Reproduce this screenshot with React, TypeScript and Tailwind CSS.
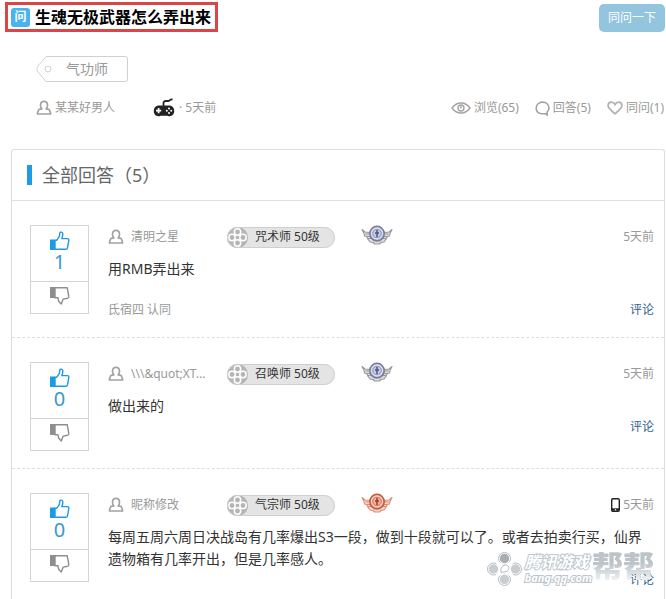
import clsx from "clsx";

type Answer = {
  name: string;
  role: string;
  medal: "silver" | "bronze";
  votes: number;
  text: string;
  agreed?: string;
  mobile?: boolean;
};

const answers: Answer[] = [
  {
    name: "清明之星",
    role: "咒术师 50级",
    medal: "silver",
    votes: 1,
    text: "用RMB弄出来",
    agreed: "氐宿四 认同",
  },
  {
    name: "\\\\\\&quot;XT...",
    role: "召唤师 50级",
    medal: "silver",
    votes: 0,
    text: "做出来的",
  },
  {
    name: "昵称修改",
    role: "气宗师 50级",
    medal: "bronze",
    votes: 0,
    text: "每周五周六周日决战岛有几率爆出S3一段，做到十段就可以了。或者去拍卖行买，仙界遗物箱有几率开出，但是几率感人。",
    mobile: true,
  },
];

function UserIcon() {
  return (
    <svg className="shrink-0" width="16" height="16" viewBox="0 0 16 16" fill="none" stroke="#a3a3a3" strokeWidth="1.7">
      <path
        d="M6.3 9.6C5 8.6 4.5 7 4.5 5.2c0-2.3 1.3-3.8 3.5-3.8s3.5 1.5 3.5 3.8c0 1.800-.5 3.400-1.800 4.400"
      />
      <path d="M5.600 9.200H4.400C2.900 9.200 2.300 10 2.100 11L1.400 14h13.200l-.7-3c-.2-1-.8-1.800-2.300-1.800h-1.200" strokeLinejoin="round" />
    </svg>
  );
}

function ThumbUp() {
  return (
    <svg width="20" height="20" viewBox="0 0 20 20">
      <path d="M0 8.5h5V19H0z" fill="#1b9be3" />
      <path
        d="M5 9.2h1.8L9.4 5.4 9.8 2c.1-1.3 2.9-1.4 3 .8.1 1.8-.3 3.4-1 4.8h5.6c1.1 0 1.6.7 1.4 1.8l-1.3 7.4c-.2 1-.8 1.5-1.8 1.5H5z"
        fill="none"
        stroke="#1b9be3"
        strokeWidth="1.4"
        strokeLinejoin="round"
      />
    </svg>
  );
}

function ThumbDown() {
  return (
    <svg width="20" height="20" viewBox="0 0 20 20">
      <path d="M0 1h5v11H0z" fill="#8e8e8e" />
      <path
        d="M5 1.7h12.2l1.6 8.7c.1.8-.4 1.5-1.200 1.800l-4.400.9-1.900 5-2.600-2.800-.7-3.500H5z"
        fill="none"
        stroke="#8e8e8e"
        strokeWidth="1.4"
        strokeLinejoin="round"
      />
    </svg>
  );
}

function GamepadIcon() {
  return (
    <svg width="22" height="20" viewBox="0 0 22 20">
      <path d="M10.5 9V5.2c0-1.6 1-2.2 2.4-2.2h2.4c1.4 0 1.3-1.6 3.7-1.6h.6" fill="none" stroke="#222" strokeWidth="1.8" />
      <path
        d="M6 7.4h10c3.3 0 5.2 2.3 5.200 5.600 0 3.200-2 5.200-4.700 5.200-1.200 0-2-.5-3-.5h-5c-1 0-1.800.5-3 .5C2.800 18.200.8 16.200.8 13c0-3.300 2-5.600 5.200-5.600z"
        fill="#222"
      />
      <path d="M3 12.7h5.2M5.6 10.1v5.2" stroke="#fff" strokeWidth="1.7" />
      <g fill="#fff">
        <circle cx="16" cy="10.5" r="1" />
        <circle cx="16" cy="14.9" r="1" />
        <circle cx="13.8" cy="12.7" r="1" />
        <circle cx="18.2" cy="12.7" r="1" />
      </g>
    </svg>
  );
}

function EyeIcon() {
  return (
    <svg width="20" height="14" viewBox="0 0 20 14" fill="none" stroke="#a3a3a3" strokeWidth="1.4">
      <path d="M1 7c2.5-3.4 5.4-5 9-5s6.5 1.6 9 5c-2.5 3.4-5.4 5-9 5S3.5 10.4 1 7z" />
      <circle cx="10" cy="7" r="3" />
      <path d="M10 5v2.5" />
    </svg>
  );
}

function BubbleIcon() {
  return (
    <svg width="15" height="15" viewBox="0 0 15 15" fill="none" stroke="#a3a3a3" strokeWidth="1.6">
      <path
        d="M12.2 10.8C13.4 9.8 14 8.5 14 7c0-3.4-2.8-5.9-6.4-5.9S1.2 3.6 1.2 7s2.3 5.400 5.300 5.700h4l1.700 1.500z"
        strokeLinejoin="round"
      />
    </svg>
  );
}

function HeartIcon() {
  return (
    <svg width="16" height="14" viewBox="0 0 16 14" fill="none" stroke="#b3b3b3" strokeWidth="1.8">
      <path d="M8 12.7C4.5 9.9 1.1 7.5 1.1 4.6 1.1 2.5 2.6 1.2 4.4 1.2 6 1.2 7.2 2 8 3.5c.8-1.5 2-2.3 3.6-2.3 1.8 0 3.3 1.3 3.3 3.4 0 2.9-3.4 5.3-6.9 8.1z" />
    </svg>
  );
}

function ReelIcon() {
  return (
    <svg className="shrink-0" width="21" height="21" viewBox="0 0 21 21">
      <circle cx="10.5" cy="10.5" r="10.5" fill="#b5b5b5" />
      <g fill="#b5b5b5" stroke="#fff" strokeWidth="1.5">
        <circle cx="10.5" cy="5" r="3.200" />
        <circle cx="10.5" cy="16" r="3.200" />
        <circle cx="5" cy="10.5" r="3.200" />
        <circle cx="16" cy="10.5" r="3.200" />
      </g>
    </svg>
  );
}

function Medal({ kind }: { kind: Answer["medal"] }) {
  const silver = kind === "silver";
  const ring = silver ? "#777b98" : "#c4573f";
  const fill = silver ? "#c3c9e3" : "#f0b19c";
  const wing = silver ? "#99999c" : "#d9907c";
  const light = silver ? "#dcdcde" : "#f7d3c8";
  const core = silver ? "#4d5484" : "#ad3420";
  return (
    <svg width="32" height="20" viewBox="0 0 32 20">
      <g fill={light} stroke={wing} strokeWidth="1.1" strokeLinejoin="round">
        <path d="M1 4.500 4 7l5 .5 1 6-3 .5-1.500-2.500L3.500 11 3 8.500z" />
        <path d="M31 4.500 28 7l-5 .5-1 6 3 .5 1.500-2.500 2-.5.500-2.500z" />
        <path d="M6.500 13.500h4l3 2.500h5l3-2.500h4L23 17l-3 .5-1.500 1.500h-5L12 17.500 9 17z" />
      </g>
      <path d="M4.500 9h4.500M27.500 9H23M6 11.500h3.500M26 11.500h-3.500" stroke={wing} />
      <circle cx="16" cy="8.500" r="7.200" fill={fill} stroke={ring} strokeWidth="1.500" />
      <circle cx="16" cy="8.500" r="5.300" fill="none" stroke={silver ? "#e9ecf8" : "#fbe1d7"} strokeWidth="1" />
      <circle cx="16" cy="8.500" r="4.300" fill="none" stroke={ring} strokeWidth=".7" />
      <path d="M16 5v7M14 8h4" stroke={core} strokeWidth="1.500" />
    </svg>
  );
}

function PhoneIcon() {
  return (
    <svg width="9" height="14" viewBox="0 0 9 14">
      <rect x=".7" y=".7" width="7.6" height="12.6" rx="1.2" fill="#fff" stroke="#222" strokeWidth="1.4" />
      <path d="M1 11.5h7" stroke="#222" strokeWidth="2.4" />
      <circle cx="4.5" cy="11.7" r=".7" fill="#fff" />
    </svg>
  );
}

function VoteBox({ votes }: { votes: number }) {
  return (
    <div className="w-[59px] h-[89px] shrink-0 border border-[#d4d4d4] flex flex-col">
      <button aria-label="赞" className="h-14 border-b border-[#d4d4d4] flex flex-col items-center pt-[5px]">
        <ThumbUp />
        <span className="text-[20px] leading-[22px] text-[#3b97cf]">{votes}</span>
      </button>
      <button aria-label="踩" className="flex-1 flex justify-center pt-1">
        <ThumbDown />
      </button>
    </div>
  );
}

function AnswerRow({ answer, last }: { answer: Answer; last: boolean }) {
  return (
    <li
      className={clsx(
        "flex gap-[19px] pt-6 pl-[18px] pr-[10px]",
        !last && "pb-[17px] border-b border-dashed border-[#dedede]",
      )}
    >
      <VoteBox votes={answer.votes} />
      <div className="flex-1 min-w-0">
        <div className="flex items-center h-6 text-[#999]">
          <div className="flex items-center gap-[7px] w-[119px] pr-2">
            <UserIcon />
            <span className="truncate">{answer.name}</span>
          </div>
          <div className="flex items-center gap-[7px] w-[108px] rounded-full bg-[#e4e4e4] outline -outline-offset-1 outline-[#cfcfcf] text-[#333]">
            <ReelIcon />
            {answer.role}
          </div>
          <div className="ml-[26px] mb-1">
            <Medal kind={answer.medal} />
          </div>
          <div className="ml-auto flex items-center gap-[3px]">
            {answer.mobile && <PhoneIcon />}
            <span>5天前</span>
          </div>
        </div>
        <p className="mt-[9px] pr-2 text-[14px] leading-[22px] text-[#333]">{answer.text}</p>
        <div className={clsx("flex items-center h-5 text-[#999]", answer.agreed && "mt-5")}>
          {answer.agreed}
          <a href="#comment" className="ml-auto text-[#33628c]">
            评论
          </a>
        </div>
      </div>
    </li>
  );
}

function Watermark() {
  return (
    <div className="absolute right-3 bottom-[13px] h-[34px] flex items-start gap-[3px] select-none pointer-events-none">
      <svg width="35" height="34" viewBox="0 0 35 34">
        <g fill="#fff" stroke="#b4bcc0" strokeWidth="1">
          <circle cx="17.5" cy="6.5" r="6" />
          <circle cx="6.500" cy="17" r="6" />
          <circle cx="28.500" cy="17" r="6" />
          <circle cx="17.5" cy="27.5" r="6" />
        </g>
        <path d="M11 9.500 9 11.500l3 5.500-3 5.500 2 2 6.500-3 6.500 3 2-2-3-5.500 3-5.500-2-2-6.500 3z" fill="#fff" />
        <g fill="#c9cdcf">
          <circle cx="17.5" cy="6.5" r="4.700" fill="#a9adaf" />
          <circle cx="6.500" cy="17" r="4.700" />
          <circle cx="28.500" cy="17" r="4.700" />
          <circle cx="17.5" cy="27.5" r="4.700" />
        </g>
        <path
          d="M14 20.500c-.5-4 .5-7.500 4.500-7.500 3 0 4.200 3 2.500 5.200-1.300 1.700-3 1.500-4.500 1.800z"
          fill="#fff"
          stroke="#b4bcc0"
        />
      </svg>
      <div className="flex flex-col italic font-bold text-white [paint-order:stroke] [-webkit-text-stroke:2px_#bcc6cc]">
        <span className="text-[16px] leading-5">腾讯游戏</span>
        <span className="text-[11px] leading-3">bang.qq.com</span>
      </div>
      <span className="-ml-[3px] text-[31px] leading-7 font-black text-transparent bg-clip-text bg-linear-to-b from-[#bcc4c9] from-40% to-[#eef1f3]">
        帮帮
      </span>
    </div>
  );
}

export default function App() {
  return (
    <div className="relative flex flex-col min-h-screen bg-white text-[12px] leading-5 font-['Noto_Sans','Noto_Sans_CJK_SC',sans-serif]">
      <header className="flex justify-between items-start pl-[5px] pr-px pt-[2px]">
        <h1 className="flex items-center gap-[5px] h-[30px] pl-[3px] pr-1 border-3 border-[#dc4545] text-[16px] font-bold text-black">
          <span className="flex items-center justify-center size-[19px] rounded-[3px] bg-[#49b3ec] text-[12px] text-white">
            问
          </span>
          生魂无极武器怎么弄出来
        </h1>
        <button className="mt-[2px] h-7 px-[9px] rounded-[5px] bg-[#93c5de] text-white">同问一下</button>
      </header>

      <div className="mt-6 pl-9">
        <a href="#tag" className="relative flex items-center w-[92px] h-[26px] pl-[30px] text-[14px] text-[#999]">
          <svg className="absolute inset-0" width="92" height="26" viewBox="0 0 92 26" fill="none" stroke="#d0d0d0">
            <path d="M10 .5h79.5a2 2 0 0 1 2 2v21a2 2 0 0 1-2 2H10L2 16c-1.5-2-1.5-4 0-6z" />
            <circle cx="12" cy="13" r="3" />
          </svg>
          气功师
        </a>
      </div>

      <div className="flex items-center mt-4 pl-9 pr-[2px] h-5 text-[#999]">
        <div className="flex items-center gap-[3px]">
          <UserIcon />
          某某好男人
        </div>
        <div className="flex items-center gap-1 ml-[38px]">
          <GamepadIcon />
          <span>· 5天前</span>
        </div>
        <div className="flex items-center gap-4 ml-auto">
          <span className="flex items-center gap-[3px]">
            <EyeIcon />
            浏览(65)
          </span>
          <span className="flex items-center gap-[3px]">
            <BubbleIcon />
            回答(5)
          </span>
          <span className="flex items-center gap-[3px]">
            <HeartIcon />
            同问(1)
          </span>
        </div>
      </div>

      <section className="flex-1 mt-[31px] ml-[11px] mr-px border border-b-0 border-[#dedede] rounded-t-[3px]">
        <h2 className="flex items-center gap-[10px] h-[51px] pl-[15px] border-b border-[#dedede] text-[18px] text-[#666]">
          <span className="w-[5px] h-5 bg-[#1d9ce5]" />
          全部回答（5）
        </h2>
        <ul>
          {answers.map((a, i) => (
            <AnswerRow key={i} answer={a} last={i === answers.length - 1} />
          ))}
        </ul>
      </section>

      <Watermark />
    </div>
  );
}
